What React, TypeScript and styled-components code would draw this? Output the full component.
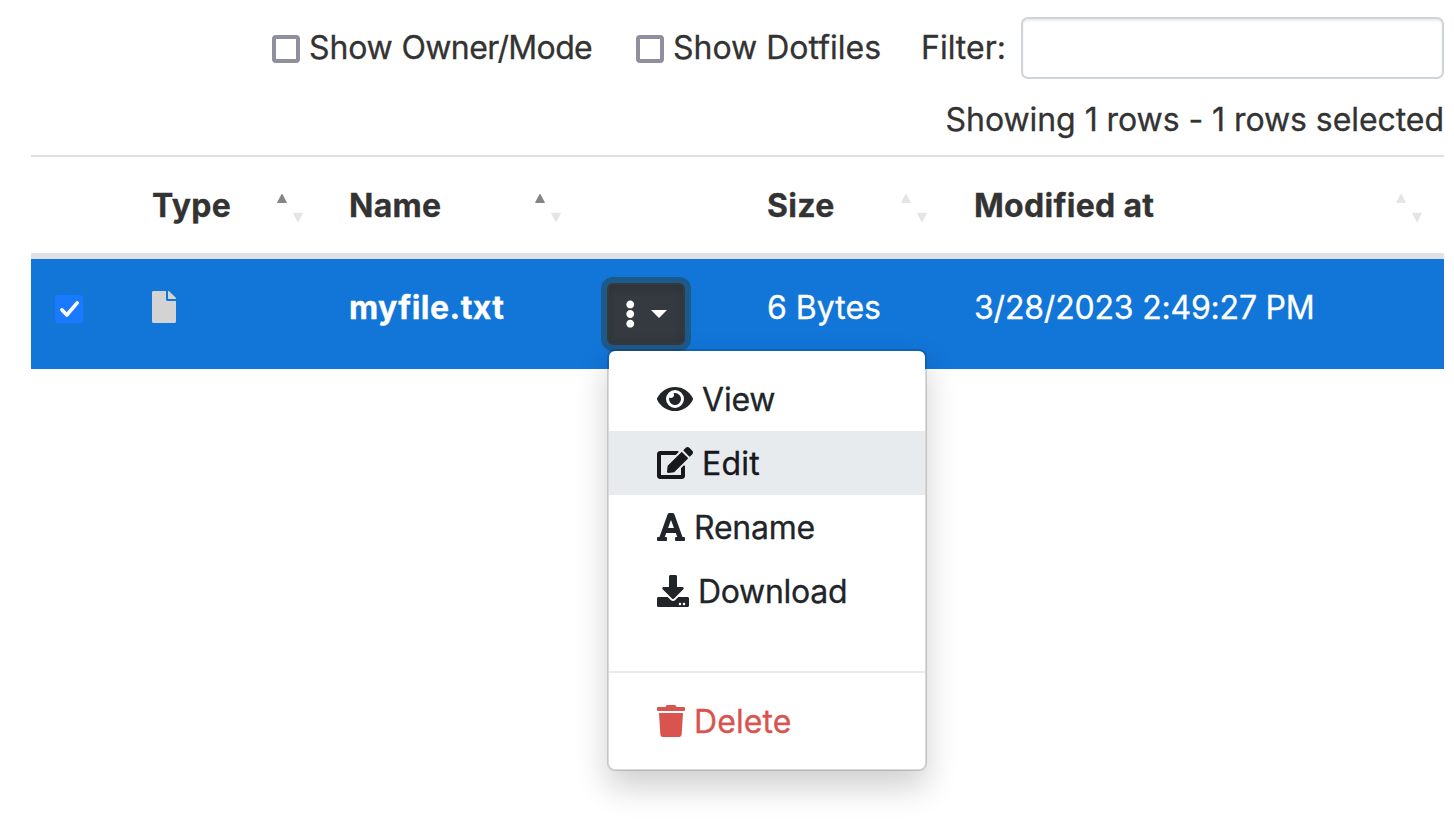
import React from "react";
import styled, { createGlobalStyle, css } from "styled-components";
import { FaDownload, FaEdit, FaEllipsisV, FaEye, FaFile, FaFont, FaTrash } from "react-icons/fa";

const GlobalStyle = createGlobalStyle`
  * { box-sizing: border-box; }
  body {
    margin: 0;
    background: #fff;
    color: #333;
    font-family: Inter, "Liberation Sans", sans-serif;
    font-size: 32px;
    line-height: 48px;
    overflow: hidden;
  }
`;

const Page = styled.main`
  width: 1444px;
  height: 823px;
  padding: 17px 0 0 31px;
`;

const Toolbar = styled.div`
  display: flex;
  justify-content: flex-end;
  align-items: center;
  height: 62px;
`;

const Text = styled.span<{ $spacing?: number }>`
  letter-spacing: ${(p) => p.$spacing ?? 0}px;
  white-space: nowrap;
  -webkit-text-stroke: 0.3px currentColor;
`;

const Option = styled.label<{ $width: number }>`
  display: flex;
  align-items: flex-start;
  gap: 9px;
  width: ${(p) => p.$width}px;
`;

const Box = styled.span<{ $checked?: boolean }>`
  display: flex;
  flex: none;
  width: 28px;
  height: 28px;
  margin-top: 11px;
  border: 4px solid #8f8f9d;
  border-radius: 4px;
  ${(p) =>
    p.$checked &&
    css`
      border: 0;
      background: #1a7aff;
    `}
`;

const FilterLabel = styled.label`
  width: 100px;
`;

const FilterInput = styled.input`
  width: 423px;
  height: 62px;
  padding: 8px 16px;
  border: 2px solid #ced4da;
  border-radius: 7px;
  background: #fff;
  box-shadow: inset 0 2px 2px rgba(0, 0, 0, 0.075);
  font: inherit;
  outline: none;
`;

const Status = styled.div`
  display: flex;
  justify-content: flex-end;
  height: 76px;
  padding-top: 17px;
`;

const row = css`
  display: grid;
  grid-template-columns: 97px 197px 258px 160px 207px 1fr;
`;

const HeaderRow = styled.div`
  ${row}
  height: 104px;
  border-top: 2px solid #dee2e6;
  border-bottom: 6px solid #dee2e6;
  font-weight: 700;
`;

const HeaderCell = styled.div<{ $right?: number }>`
  display: flex;
  justify-content: space-between;
  align-items: flex-start;
  padding: 25px ${(p) => p.$right ?? 21}px 0 24px;
`;

const SortIcon = styled.svg`
  flex: none;
  width: 27px;
  height: 29px;
  margin-top: 11px;
`;

const FileRow = styled.div`
  ${row}
  height: 110px;
  background: #1275d8;
  color: #fff;
`;

const Cell = styled.div<{ $top?: number; $bold?: boolean }>`
  display: flex;
  align-items: flex-start;
  padding: ${(p) => p.$top ?? 25}px 0 0 24px;
  font-weight: ${(p) => (p.$bold ? 700 : 400)};
`;

const Icon = styled.span<{ $width: number; $height?: number }>`
  display: flex;
  flex: none;
  svg {
    width: ${(p) => p.$width}px;
    height: ${(p) => p.$height ?? 32}px;
  }
`;

const FileIcon = styled(Icon)`
  margin-left: -0.5px;
  color: #d3d3d3;
`;

const Dropdown = styled.div`
  position: relative;
`;

const Toggle = styled.button`
  display: flex;
  align-items: center;
  width: 78px;
  height: 62px;
  padding: 0 0 0 16px;
  gap: 15.5px;
  border: 2px solid #373a3c;
  border-radius: 6px;
  background: #343a40;
  box-shadow: inset 0 3px 8px rgba(0, 0, 0, 0.14), 0 0 0 6px #1c5a8c;
  color: #fff;
`;

const Caret = styled.svg`
  flex: none;
  width: 16px;
  height: 8px;
`;

const Menu = styled.div`
  position: absolute;
  z-index: 1;
  top: 66px;
  left: 0;
  width: 320px;
  height: 422px;
  padding: 16px 0;
  border: 2px solid rgba(0, 0, 0, 0.15);
  border-radius: 8px;
  background: #fff;
  background-clip: padding-box;
  box-shadow: 0 16px 32px rgba(0, 0, 0, 0.19);
`;

const MenuItem = styled.div<{ $active?: boolean; $danger?: boolean }>`
  display: flex;
  align-items: flex-start;
  gap: 9px;
  height: 64px;
  padding: 9px 0 0 48px;
  font-weight: 400;
  background: ${(p) => (p.$active ? "#e7ebee" : "transparent")};
  color: ${(p) => (p.$danger ? "#d9534f" : p.$active ? "#16181b" : "#212529")};
  ${Icon} {
    margin-top: 7px;
  }
`;

const Divider = styled.div`
  height: 2px;
  margin: 48px 0 16px;
  background: #e9ecef;
`;

function Sort({ ascending = false }: { ascending?: boolean }) {
  return (
    <SortIcon viewBox="0 0 27 29">
      <path d="M4.6 1H5.4L9.8 9.2V10H0.2V9.2Z" fill={ascending ? "#858585" : "#e5e5e5"} />
      <path d="M16.2 19.8H25.8V20.6L21.4 28.9H20.6L16.2 20.6Z" fill="#e5e5e5" />
    </SortIcon>
  );
}

export default function App() {
  return (
    <>
      <GlobalStyle />
      <Page>
        <Toolbar>
          <Option $width={364}>
            <Box />
            <Text $spacing={-0.15}>
              Show <Text $spacing={-0.65}>Owner/Mode</Text>
            </Text>
          </Option>
          <Option $width={285}>
            <Box />
            <Text>Show Dotfiles</Text>
          </Option>
          <FilterLabel>
            <Text>Filter:</Text>
          </FilterLabel>
          <FilterInput />
        </Toolbar>
        <Status>
          <Text $spacing={-0.06}>Showing 1 rows - 1 rows selected</Text>
        </Status>
        <HeaderRow>
          <div />
          <HeaderCell>
            <Text $spacing={0.3}>Type</Text>
            <Sort ascending />
          </HeaderCell>
          <HeaderCell>
            <Text $spacing={0.3}>Name</Text>
            <Sort ascending />
          </HeaderCell>
          <div />
          <HeaderCell $right={22}>
            <Text $spacing={0.3}>Size</Text>
            <Sort />
          </HeaderCell>
          <HeaderCell>
            <Text $spacing={0.3}>Modified at</Text>
            <Sort />
          </HeaderCell>
        </HeaderRow>
        <FileRow>
          <Cell>
            <Box $checked>
              <svg width="28" height="28" viewBox="0 0 28 28">
                <path d="M6.9 14.8L11.8 20L22.2 7.9" fill="none" stroke="#fff" strokeWidth="3.6" strokeLinecap="round" strokeLinejoin="round" />
              </svg>
            </Box>
          </Cell>
          <Cell $top={32}>
            <FileIcon $width={24}>
              <FaFile />
            </FileIcon>
          </Cell>
          <Cell $bold>
            <Text $spacing={0.45}>myfile.txt</Text>
          </Cell>
          <Cell $top={24}>
            <Dropdown>
              <Toggle>
                <Icon $width={10.5} $height={28}>
                  <FaEllipsisV />
                </Icon>
                <Caret viewBox="0 0 16 8">
                  <path d="M0 0H16L8 8Z" fill="#fff" />
                </Caret>
              </Toggle>
              <Menu>
                <MenuItem>
                  <Icon $width={36}>
                    <FaEye />
                  </Icon>
                  <Text $spacing={-0.2}>View</Text>
                </MenuItem>
                <MenuItem $active>
                  <Icon $width={36}>
                    <FaEdit />
                  </Icon>
                  <Text $spacing={0.2}>Edit</Text>
                </MenuItem>
                <MenuItem>
                  <Icon $width={28}>
                    <FaFont />
                  </Icon>
                  <Text $spacing={-0.25}>Rename</Text>
                </MenuItem>
                <MenuItem>
                  <Icon $width={32}>
                    <FaDownload />
                  </Icon>
                  <Text $spacing={-0.3}>Download</Text>
                </MenuItem>
                <Divider />
                <MenuItem $danger>
                  <Icon $width={28}>
                    <FaTrash />
                  </Icon>
                  <Text $spacing={0.1}>Delete</Text>
                </MenuItem>
              </Menu>
            </Dropdown>
          </Cell>
          <Cell>
            <Text>6 Bytes</Text>
          </Cell>
          <Cell>
            <Text $spacing={-0.2}>3/28/2023 2:49:27 PM</Text>
          </Cell>
        </FileRow>
      </Page>
    </>
  );
}
